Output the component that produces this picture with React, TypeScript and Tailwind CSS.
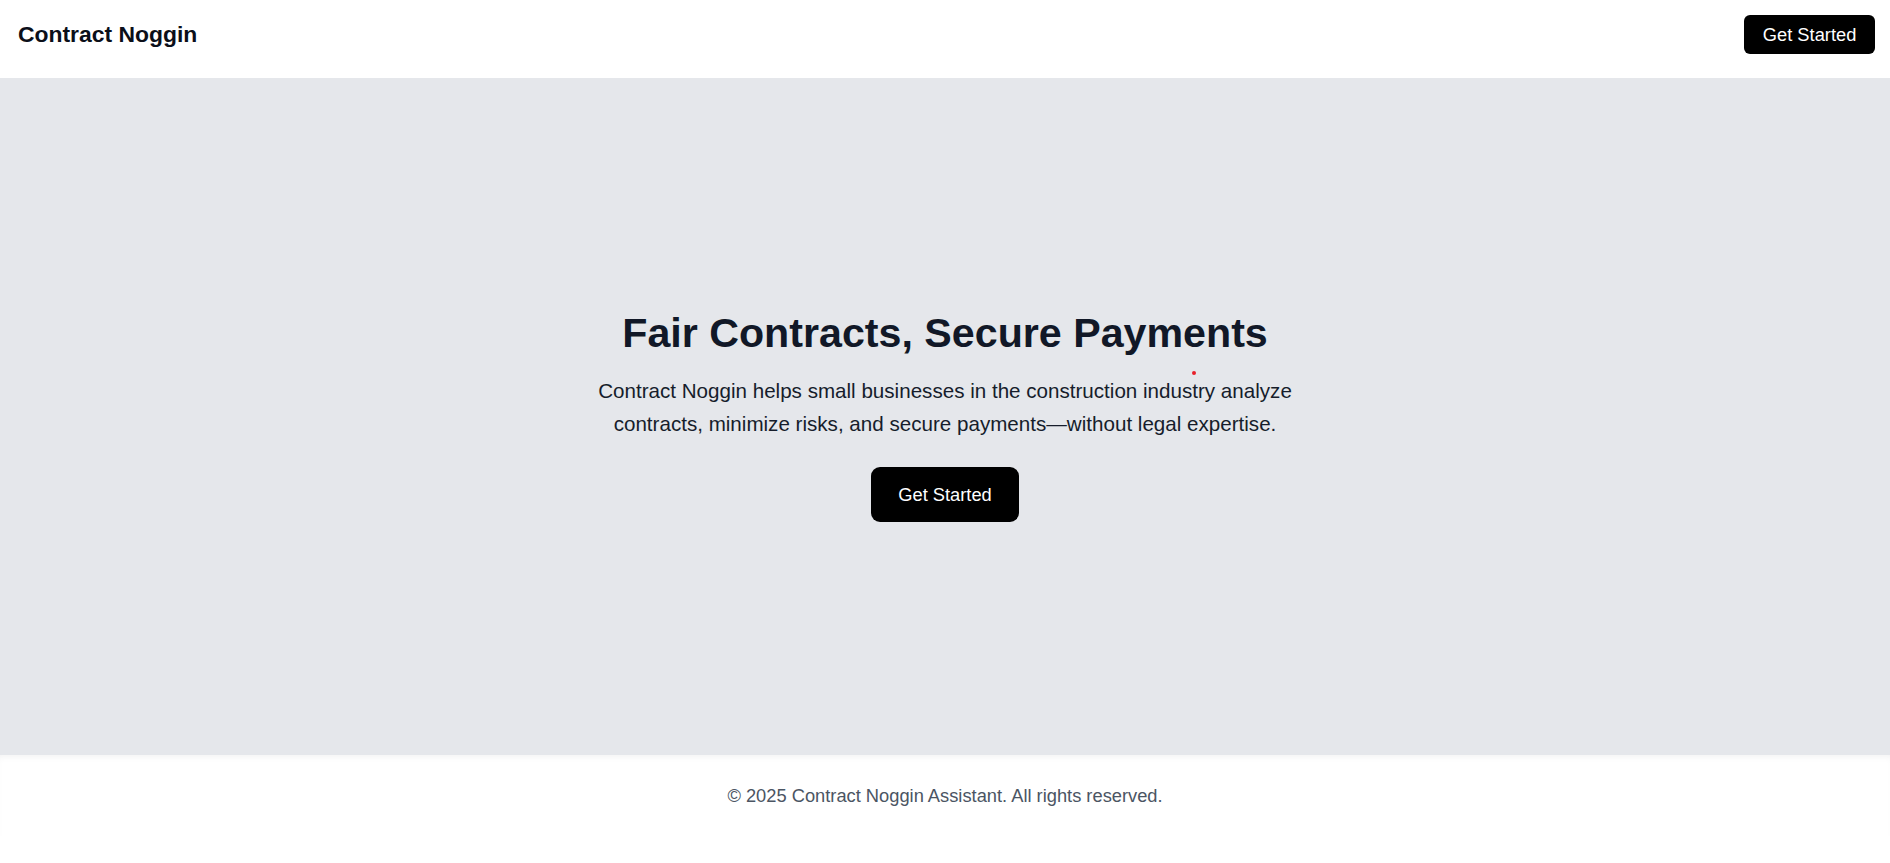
import React from "react";

export default function App() {
  return (
    <div className="min-h-screen bg-white flex flex-col font-['Liberation_Sans',Arial,sans-serif]">
      <header className="flex items-center justify-between pl-[18px] pr-[15px] pt-[15px] pb-[24px] bg-white">
        <h1 className="text-[22.9px] leading-[31.5px] font-bold text-[#0b0f19]">Contract Noggin</h1>
        <button className="bg-black text-white text-[18.3px] leading-[27px] px-[18.7px] py-[6px] rounded-[6px]">
          Get Started
        </button>
      </header>

      <main className="relative h-[677px] bg-[#e5e7eb] flex flex-col items-center justify-center text-center">
        <h2 className="text-[41.2px] leading-[45px] font-bold text-[#111827] mb-[19px]">
          Fair Contracts, Secure Payments
        </h2>
        <p className="text-[20.6px] leading-[32.9px] text-[#161d2b] max-w-[730px] mb-[26px]">
          Contract Noggin helps small businesses in the construction industry analyze contracts, minimize risks, and secure payments—without legal expertise.
        </p>
        <button className="bg-black text-white text-[18.3px] leading-[27px] px-[27.2px] py-[14px] rounded-[9px]">
          Get Started
        </button>
        <span className="absolute left-[1192px] top-[293px] w-[4px] h-[4px] rounded-full bg-[#e8202a]" />
      </main>

      <footer className="bg-white py-[27px] text-center shadow-[inset_0_5px_6px_-3px_rgba(0,0,0,0.05)]">
        <p className="text-[18.3px] leading-[27px] text-[#4b5563]">
          © 2025 Contract Noggin Assistant. All rights reserved.
        </p>
      </footer>
    </div>
  );
}
